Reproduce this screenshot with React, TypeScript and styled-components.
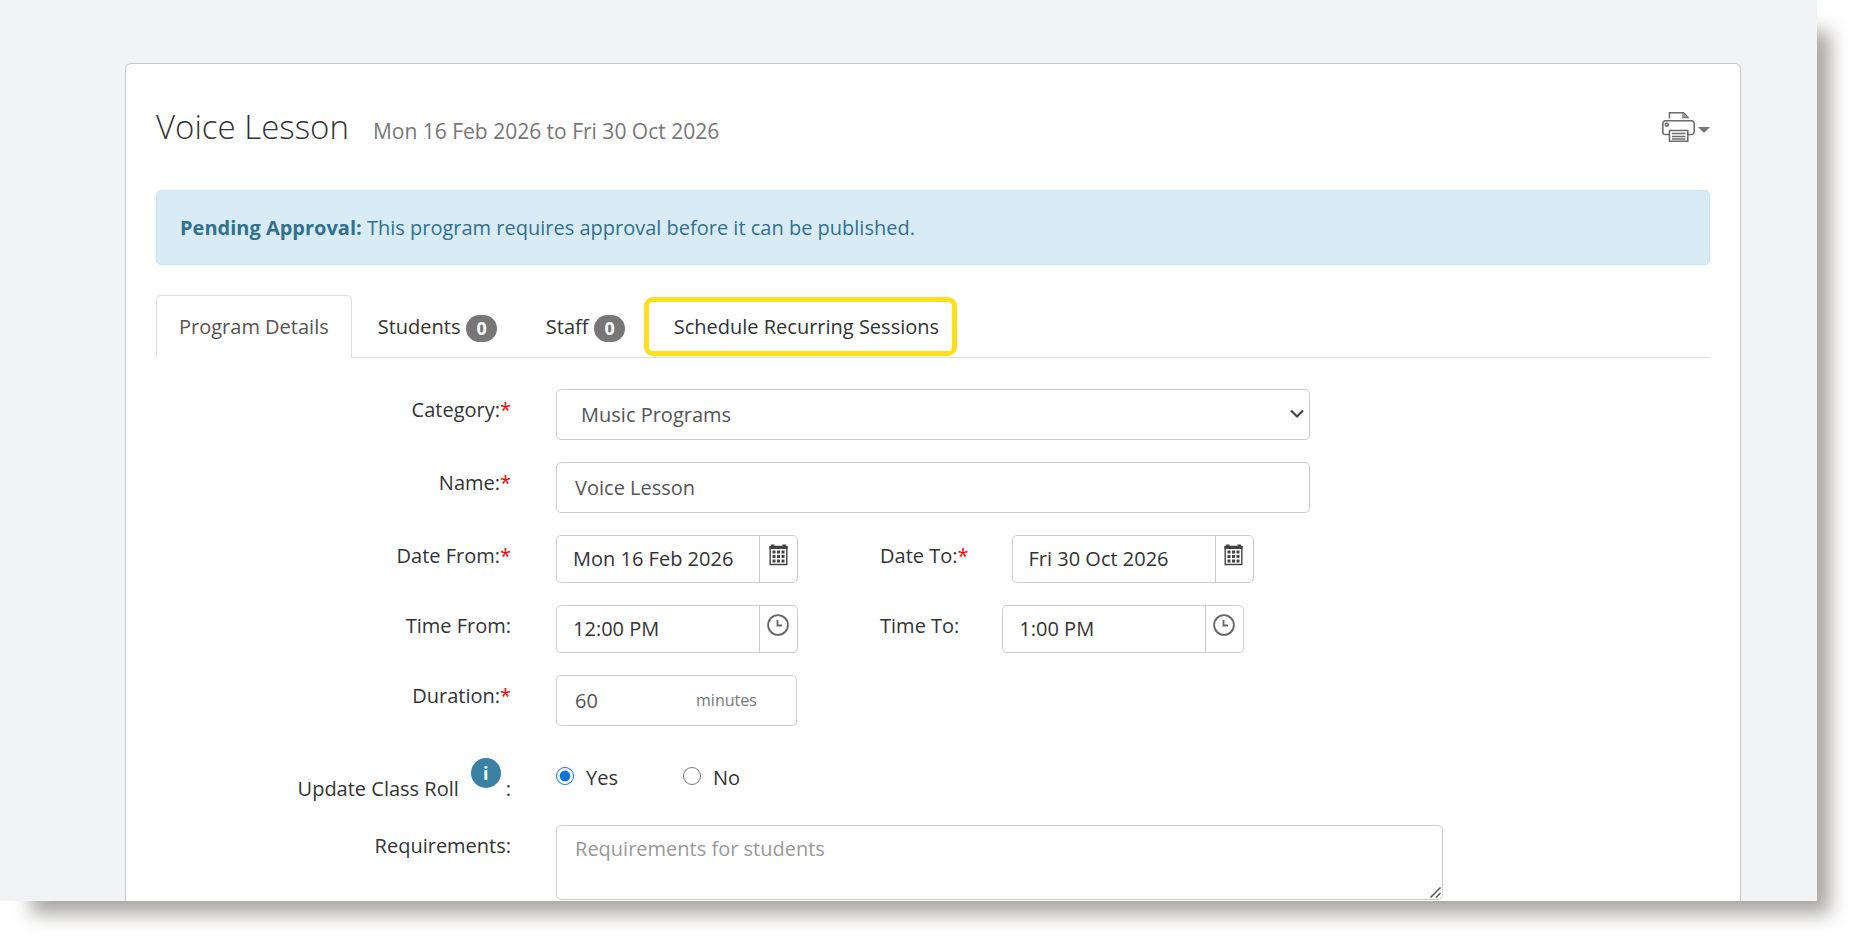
import React from "react";
import styled, { createGlobalStyle } from "styled-components";

const GlobalStyle = createGlobalStyle`
  *, *::before, *::after { box-sizing: border-box; }
  body {
    margin: 0;
    background: #fff;
    color: #333;
    font-family: "Open Sans", "Noto Sans", sans-serif;
    font-size: 20px;
    line-height: 28px;
  }
  input, select, textarea, button { font: inherit; color: inherit; }
`;

const Page = styled.div`
  margin: 0 46px 46px 0;
  padding: 63px 76px 0 125px;
  background: #f1f3f5;
  box-shadow: 22px 22px 18px -9px #a8a6a4;
`;

const Card = styled.main`
  padding: 30px 30px 1px;
  background: #fff;
  border: 1px solid #c8c8c8;
  border-bottom: 0;
  border-radius: 6px 6px 0 0;
`;

const Header = styled.header`
  display: flex;
  align-items: center;
  justify-content: space-between;
  height: 66px;
  margin-bottom: 30px;
`;

const Title = styled.h1`
  display: flex;
  align-items: baseline;
  gap: 24px;
  margin: 0;
  padding-top: 3px;
  font-size: 33px;
  line-height: 44px;
  font-weight: 300;
`;

const DateRange = styled.small`
  color: #777;
  font-size: 21px;
  font-weight: 400;
`;

const PrintButton = styled.button`
  display: flex;
  align-items: center;
  gap: 3px;
  padding: 0;
  border: 0;
  background: none;
  color: #777;
  cursor: pointer;
`;

const Caret = styled.svg`
  margin-top: 6px;
`;

const Alert = styled.div`
  padding: 23px 23px 22px;
  margin-bottom: 30px;
  color: #31708f;
  background: #d9ecf6;
  border: 1px solid #bce8f1;
  border-radius: 5px;
`;

const Tabs = styled.nav`
  display: flex;
  align-items: flex-end;
  gap: 3px;
  border-bottom: 1px solid #ddd;
`;

const Tab = styled.a<{ $active?: boolean }>`
  position: relative;
  display: flex;
  align-items: center;
  gap: 6px;
  height: 63px;
  margin-bottom: -1px;
  padding: 0 22px;
  border: 1px solid ${(p) => (p.$active ? "#ddd" : "transparent")};
  border-bottom-color: ${(p) => (p.$active ? "#fff" : "transparent")};
  border-radius: 5px 5px 0 0;
  color: ${(p) => (p.$active ? "#555" : "#333")};
  text-decoration: none;
`;

const Badge = styled.span`
  margin-top: 3px;
  padding: 0 10px;
  border-radius: 14px;
  background: #777;
  color: #fff;
  font-size: 18px;
  font-weight: 700;
  line-height: 27px;
`;

const Highlight = styled.span`
  position: absolute;
  inset: 1px 4px 1px -8px;
  border: 5px solid #fddf1a;
  border-radius: 9px;
  pointer-events: none;
`;

const Form = styled.form`
  display: grid;
  gap: 22px;
  padding-top: 31px;
`;

const Row = styled.div`
  display: grid;
  grid-template-columns: 4fr 13fr;
  column-gap: 45px;
`;

const Label = styled.label`
  padding-top: 7px;
  text-align: right;
`;

const Required = styled.span`
  color: #f00;
`;

const SelectWrap = styled.div`
  position: relative;
  max-width: 754px;
`;

const Select = styled.select`
  appearance: none;
  width: 100%;
  height: 51px;
  padding: 0 24px;
  border: 1px solid #ccc;
  border-radius: 5px;
  background: #fff;
  color: #555;
`;

const Chevron = styled.svg`
  position: absolute;
  right: 6px;
  top: 20px;
  pointer-events: none;
`;

const TextInput = styled.input`
  width: 100%;
  max-width: 754px;
  height: 51px;
  padding: 0 18px;
  border: 1px solid #ccc;
  border-radius: 5px;
  background: #fff;
  color: #555;
`;

const Pair = styled.div`
  display: flex;
  gap: 82px;
`;

const SecondField = styled.div`
  display: flex;
  gap: 43px;
`;

const Group = styled.div`
  display: flex;
  width: 242px;
  height: 48px;
  border: 1px solid #ccc;
  border-radius: 5px;
`;

const GroupInput = styled.input`
  flex: 1;
  min-width: 0;
  padding: 0 16px;
  border: 0;
  background: none;
`;

const Addon = styled.button`
  display: flex;
  justify-content: center;
  width: 38px;
  padding: 8px 1px 0 0;
  border: 0;
  border-left: 1px solid #ccc;
  background: none;
  cursor: pointer;
`;

const DurationBox = styled.div`
  display: flex;
  align-items: center;
  width: 241px;
  height: 51px;
  border: 1px solid #ccc;
  border-radius: 5px;
`;

const DurationInput = styled.input`
  width: 139px;
  padding: 0 18px;
  border: 0;
  background: none;
  color: #555;
`;

const Unit = styled.span`
  padding-bottom: 2px;
  color: #777;
  font-size: 16px;
`;

const RollLabel = styled.div`
  display: flex;
  justify-content: flex-end;
  padding-top: 10px;
  height: 55px;
`;

const RollText = styled.span`
  padding-top: 17px;
`;

const Info = styled.button`
  width: 30px;
  height: 30px;
  margin: 0 5px 0 12px;
  padding: 0;
  border: 0;
  border-radius: 50%;
  background: #3a80a2;
  color: #fff;
  font-size: 18px;
  font-weight: 700;
`;

const Radios = styled.div`
  display: flex;
  gap: 65px;
  padding-top: 16px;
`;

const RadioLabel = styled.label`
  display: flex;
  align-items: flex-start;
  gap: 12px;
`;

const Radio = styled.input`
  width: 18px;
  height: 18px;
  margin: 3px 0 0;
  accent-color: #0f75d5;
`;

const TextAreaWrap = styled.div`
  position: relative;
  max-width: 887px;
`;

const TextArea = styled.textarea`
  display: block;
  width: 100%;
  height: 75px;
  padding: 9px 18px;
  border: 1px solid #ccc;
  border-radius: 5px;
  resize: none;
  overflow: hidden;
  &::placeholder { color: #999; }
`;

const Grip = styled.svg`
  position: absolute;
  right: 2px;
  bottom: 2px;
  pointer-events: none;
`;

const PrinterIcon = () => (
  <svg width="33" height="30" viewBox="0 0 33 30" fill="none" stroke="#6c6c6c" strokeWidth="1.6" aria-hidden="true">
    <path d="M7.5 6.5V.8H21.5l4.5 4.500v1.200M21.200.8v4.700H26" />
    <path d="M21.200.8v4.700H26z" fill="#999" stroke="none" />
    <path d="M7 22.500H3.500a2.700 2.700 0 0 1-2.700-2.700v-8.300a2.700 2.700 0 0 1 2.700-2.700h26a2.700 2.700 0 0 1 2.700 2.700v8.300a2.700 2.700 0 0 1-2.700 2.700H26" />
    <circle cx="4.800" cy="12.800" r="1.500" />
    <path d="M7.500 18.500h18.300v10.700H7.500z" />
    <path d="M10 21.500h13.400M10 24.500h13.400M10 27h13.400" strokeWidth="1.300" />
  </svg>
);

const CalendarIcon = () => (
  <svg width="19" height="22" viewBox="0 0 18 22" aria-hidden="true">
    <path d="M.7 2.5h16.600v18H.7z" fill="#fff" stroke="#444" strokeWidth="1.4" />
    <path d="M0 2h18v3H0zM1.500.5h3.500v2H1.500zM13 .5h3.500v2H13z" fill="#444" />
    {[6.5, 11, 15.5].map((y) =>
      [3, 7.5, 12].map((x) => <rect key={`${x}-${y}`} x={x} y={y} width="3" height="3" fill="#444" />)
    )}
  </svg>
);

const ClockIcon = () => (
  <svg width="22" height="22" viewBox="0 0 22 22" fill="none" stroke="#666" strokeWidth="1.8" aria-hidden="true">
    <circle cx="11" cy="11" r="9.900" />
    <path d="M10.500 6v5.500H15" />
  </svg>
);

type PickerProps = { id: string; value: string; kind: "date" | "time" };

const Picker = ({ id, value, kind }: PickerProps) => (
  <Group>
    <GroupInput id={id} defaultValue={value} />
    <Addon type="button" aria-label={kind === "date" ? "Choose date" : "Choose time"}>
      {kind === "date" ? <CalendarIcon /> : <ClockIcon />}
    </Addon>
  </Group>
);

export default function App() {
  return (
    <>
      <GlobalStyle />
      <Page>
        <Card>
          <Header>
            <Title>
              Voice Lesson <DateRange>Mon 16 Feb 2026 to Fri 30 Oct 2026</DateRange>
            </Title>
            <PrintButton type="button" aria-label="Print">
              <PrinterIcon />
              <Caret width="12" height="6" viewBox="0 0 12 6" aria-hidden="true">
                <path d="M0 0h12L6 6z" fill="#777" />
              </Caret>
            </PrintButton>
          </Header>
          <Alert role="status">
            <strong>Pending Approval:</strong> This program requires approval before it can be published.
          </Alert>
          <Tabs>
            <Tab href="#details" $active>Program Details</Tab>
            <Tab href="#students">Students <Badge>0</Badge></Tab>
            <Tab href="#staff">Staff <Badge>0</Badge></Tab>
            <Tab href="#schedule">Schedule Recurring Sessions<Highlight /></Tab>
          </Tabs>
          <Form>
            <Row>
              <Label htmlFor="category">Category:<Required>*</Required></Label>
              <SelectWrap>
                <Select id="category"><option>Music Programs</option></Select>
                <Chevron width="14" height="10" viewBox="0 0 14 10" fill="none" stroke="#444" strokeWidth="2.2" aria-hidden="true">
                  <path d="M1 1.5l6 6 6-6" />
                </Chevron>
              </SelectWrap>
            </Row>
            <Row>
              <Label htmlFor="name">Name:<Required>*</Required></Label>
              <TextInput id="name" defaultValue="Voice Lesson" />
            </Row>
            <Row>
              <Label htmlFor="date-from">Date From:<Required>*</Required></Label>
              <Pair>
                <Picker id="date-from" value="Mon 16 Feb 2026" kind="date" />
                <SecondField>
                  <Label htmlFor="date-to">Date To:<Required>*</Required></Label>
                  <Picker id="date-to" value="Fri 30 Oct 2026" kind="date" />
                </SecondField>
              </Pair>
            </Row>
            <Row>
              <Label htmlFor="time-from">Time From:</Label>
              <Pair>
                <Picker id="time-from" value="12:00 PM" kind="time" />
                <SecondField>
                  <Label htmlFor="time-to">Time To:</Label>
                  <Picker id="time-to" value="1:00 PM" kind="time" />
                </SecondField>
              </Pair>
            </Row>
            <Row>
              <Label htmlFor="duration">Duration:<Required>*</Required></Label>
              <DurationBox>
                <DurationInput id="duration" defaultValue="60" />
                <Unit>minutes</Unit>
              </DurationBox>
            </Row>
            <Row role="radiogroup" aria-labelledby="roll-label">
              <RollLabel>
                <RollText id="roll-label">Update Class Roll</RollText>
                <Info type="button" aria-label="About updating the class roll">i</Info>
                <RollText>:</RollText>
              </RollLabel>
              <Radios>
                <RadioLabel><Radio type="radio" name="roll" defaultChecked />Yes</RadioLabel>
                <RadioLabel><Radio type="radio" name="roll" />No</RadioLabel>
              </Radios>
            </Row>
            <Row>
              <Label htmlFor="requirements">Requirements:</Label>
              <TextAreaWrap>
                <TextArea id="requirements" placeholder="Requirements for students" />
                <Grip width="11" height="11" viewBox="0 0 11 11" stroke="#555" strokeWidth="1.500" aria-hidden="true">
                  <path d="M.5 10.500l10-10M6 10.500L10.500 6" />
                </Grip>
              </TextAreaWrap>
            </Row>
          </Form>
        </Card>
      </Page>
    </>
  );
}
